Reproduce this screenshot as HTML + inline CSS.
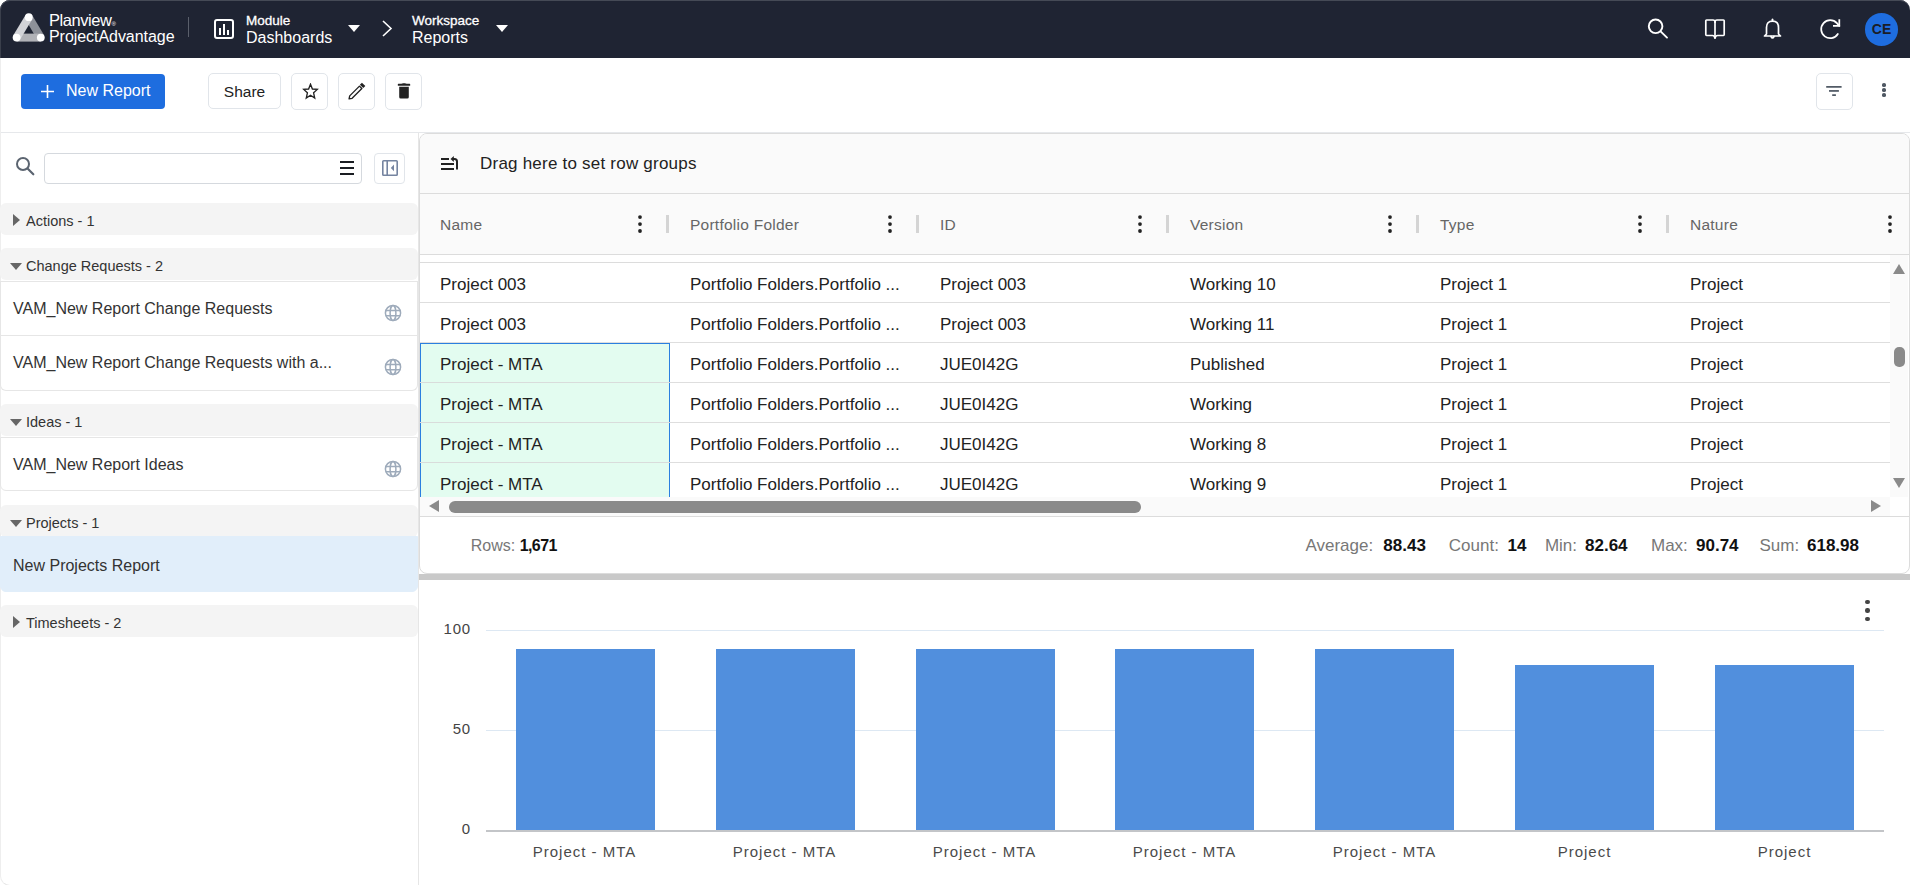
<!DOCTYPE html>
<html><head><meta charset="utf-8">
<style>
*{box-sizing:border-box;margin:0;padding:0}
html,body{width:1910px;height:885px;overflow:hidden;background:#fff;font-family:"Liberation Sans",sans-serif;color:#222}
.abs{position:absolute}
#hdr{position:absolute;left:0;top:0;width:1910px;height:58px;background:#1f2433;border-radius:10px 10px 0 0;box-shadow:inset 0 1px 0 #454a56, inset 1px 0 0 #3a3f4b}
.wt{color:#fff;white-space:nowrap}
.btn{position:absolute;border:1px solid #e1e5ea;border-radius:5px;background:#fff}
.ico{position:absolute}
.grp{position:absolute;left:0;width:418px;height:32px;background:#f4f4f4;border-radius:6px;font-size:14.5px;color:#333;line-height:37px;padding-left:26px;white-space:nowrap}
.tri-r{position:absolute;left:13px;top:11px;width:0;height:0;border-top:6px solid transparent;border-bottom:6px solid transparent;border-left:7px solid #666}
.tri-d{position:absolute;left:10px;top:15px;width:0;height:0;border-left:6px solid transparent;border-right:6px solid transparent;border-top:7px solid #666}
.item{position:absolute;left:0;width:418px;background:#fff;border:1px solid #e6e6e6;font-size:16px;color:#333;padding-left:12px;white-space:nowrap}
.glb{position:absolute;right:15px}
.hcell{position:absolute;top:195px;height:60px;line-height:60px;font-size:15.5px;letter-spacing:0.25px;color:#666;white-space:nowrap}
.cell{position:absolute;height:40px;line-height:40px;font-size:17px;color:#222;white-space:nowrap}
.sep{position:absolute;top:215px;width:3px;height:18px;background:#d4d4d4}
.keb{position:absolute;width:4px}
.keb i{display:block;width:3.6px;height:3.6px;border-radius:50%;background:#222;margin-bottom:3.3px;margin-left:0.2px}
.rowline{position:absolute;left:420px;width:1470px;height:1px;background:#dedede}
.lbl{color:#777}
.val{font-weight:700;color:#111}
.bar{position:absolute;background:#518fdd;width:139px}
.xl{position:absolute;top:843px;font-size:15px;color:#4a4a4a;white-space:nowrap;text-align:center;width:200px;letter-spacing:1px;text-indent:1px}
.yl{position:absolute;font-size:15px;color:#444;text-align:right;width:40px;letter-spacing:0.8px}
</style></head>
<body>
<!-- HEADER -->
<div id="hdr">
  <!-- logo -->
  <svg class="ico" style="left:8px;top:8px" width="42" height="38" viewBox="0 0 42 38">
    <line x1="20.8" y1="9.2" x2="32.8" y2="29.6" stroke="#8e9199" stroke-width="8"/>
    <line x1="8.6" y1="29.6" x2="32.8" y2="29.6" stroke="#b1b2b7" stroke-width="8"/>
    <line x1="20.8" y1="9.2" x2="8.6" y2="29.6" stroke="#d3d4d8" stroke-width="8"/>
    <circle cx="20.8" cy="9.2" r="3.9" fill="#fff"/>
    <circle cx="8.6" cy="29.6" r="3.9" fill="#fff"/>
    <circle cx="32.8" cy="29.6" r="3.9" fill="#fff"/>
  </svg>
  <div class="abs wt" style="left:49px;top:11px;font-size:16.5px;line-height:19px;letter-spacing:-0.45px">Planview<span style="font-size:6px">®</span></div>
  <div class="abs wt" style="left:49px;top:28px;font-size:16px;line-height:18px;letter-spacing:-0.05px">ProjectAdvantage</div>
  <div class="abs" style="left:188px;top:17px;width:1px;height:20px;background:#5a5f6b"></div>
  <!-- module -->
  <svg class="ico" style="left:214px;top:19px" width="20" height="20" viewBox="0 0 20 20">
    <rect x="1" y="1" width="18" height="18" rx="2" fill="none" stroke="#fff" stroke-width="2"/>
    <rect x="5" y="9" width="2" height="7" fill="#fff"/><rect x="9" y="5" width="2" height="11" fill="#fff"/><rect x="13" y="11" width="2" height="5" fill="#fff"/>
  </svg>
  <div class="abs wt" style="left:246px;top:13px;font-size:13.5px;line-height:15px;-webkit-text-stroke:0.3px #fff">Module</div>
  <div class="abs wt" style="left:246px;top:29px;font-size:16px;line-height:18px">Dashboards</div>
  <div class="abs" style="left:348px;top:25px;border-left:6px solid transparent;border-right:6px solid transparent;border-top:7px solid #fff"></div>
  <svg class="ico" style="left:381px;top:20px" width="12" height="17" viewBox="0 0 12 17"><polyline points="2,1 10,8.5 2,16" fill="none" stroke="#fff" stroke-width="1.6"/></svg>
  <div class="abs wt" style="left:412px;top:13px;font-size:13.5px;line-height:15px;-webkit-text-stroke:0.3px #fff">Workspace</div>
  <div class="abs wt" style="left:412px;top:29px;font-size:16px;line-height:18px">Reports</div>
  <div class="abs" style="left:496px;top:25px;border-left:6px solid transparent;border-right:6px solid transparent;border-top:7px solid #fff"></div>
  <!-- right icons -->
  <svg class="ico" style="left:1646px;top:17px" width="24" height="24" viewBox="0 0 24 24"><circle cx="9.6" cy="9.3" r="6.8" fill="none" stroke="#fff" stroke-width="1.9"/><line x1="14.6" y1="14.4" x2="21" y2="20.6" stroke="#fff" stroke-width="1.9" stroke-linecap="round"/></svg>
  <svg class="ico" style="left:1703px;top:17px" width="24" height="24" viewBox="0 0 24 24"><g fill="none" stroke="#fff" stroke-width="1.7" stroke-linejoin="round" stroke-linecap="round"><path d="M12 5 Q12 3 10 3 H3.6 Q2.8 3 2.8 3.8 V17.6 Q2.8 18.5 3.6 18.5 H9.5 Q11.3 18.5 12 21"/><path d="M12 5 Q12 3 14 3 H20.4 Q21.2 3 21.2 3.8 V17.6 Q21.2 18.5 20.4 18.5 H14.5 Q12.7 18.5 12 21"/><path d="M12 5 V20.5"/></g></svg>
  <svg class="ico" style="left:1760px;top:17px" width="24" height="24" viewBox="0 0 24 24"><g fill="none" stroke="#fff" stroke-width="1.7" stroke-linejoin="round" stroke-linecap="round"><path d="M6.5 17 V10.5 Q6.5 4.2 12.5 4.2 Q18.5 4.2 18.5 10.5 V17 L20.5 19 H4.5 L6.5 17 Z"/><path d="M12.5 2.3 V4.2"/><path d="M11 19.5 Q12.5 22.3 14 19.5"/></g></svg>
  <svg class="ico" style="left:1818px;top:17px" width="24" height="24" viewBox="0 0 24 24"><g fill="none" stroke="#fff" stroke-width="1.75" stroke-linecap="round"><path d="M19.83 16.97 A9.0 9.0 0 1 1 18.89 6.18 L21.3 8.9"/><polyline points="21.3,2.2 21.3,8.9 15,8.9" stroke-linejoin="miter" stroke-linecap="butt"/></g></svg>
  <div class="abs" style="left:1865px;top:13px;width:33px;height:32.5px;border-radius:50%;background:#1e6ddf;color:#1a1d26;font-weight:700;font-size:14px;line-height:32px;text-align:center">CE</div>
</div>

<!-- TOOLBAR -->
<div class="abs" style="left:21px;top:74px;width:144px;height:35px;background:#1e6ddf;border-radius:4px"></div>
<svg class="ico" style="left:40px;top:84px" width="15" height="15" viewBox="0 0 15 15"><path d="M7.5 1 V14 M1 7.5 H14" stroke="#fff" stroke-width="1.6"/></svg>
<div class="abs wt" style="left:66px;top:82px;font-size:16px;line-height:18px">New Report</div>
<div class="btn" style="left:208px;top:73px;width:73px;height:36px;font-size:15.5px;line-height:36px;text-align:center;color:#222">Share</div>
<div class="btn" style="left:291px;top:73px;width:37px;height:37px"></div>
<svg class="ico" style="left:301.5px;top:83px" width="17" height="17" viewBox="0 0 17 17"><polygon points="8.5,1.2 10.4,6 15.3,6.4 11.6,9.8 12.7,15 8.5,12.2 4.3,15 5.4,9.8 1.7,6.4 6.6,6" fill="none" stroke="#222" stroke-width="1.35" stroke-linejoin="miter"/></svg>
<div class="btn" style="left:338px;top:73px;width:37px;height:37px"></div>
<svg class="ico" style="left:345px;top:81px" width="22" height="22" viewBox="0 0 22 22"><g transform="rotate(45 11 11)"><path d="M9.3 4.4 H12.7 V18.2 L11 20.8 L9.3 18.2 Z" fill="none" stroke="#222" stroke-width="1.35" stroke-linejoin="round"/><rect x="8.6" y="0.2" width="4.8" height="2.9" fill="#222"/></g></svg>
<div class="btn" style="left:385px;top:73px;width:37px;height:37px"></div>
<svg class="ico" style="left:397px;top:82px" width="14" height="18" viewBox="0 0 14 18"><rect x="0.8" y="1.8" width="12.4" height="2" rx="0.6" fill="#222"/><path d="M4.3 2 Q7 0.6 9.7 2 Z" fill="#222"/><path d="M2.2 4.8 H11.8 V15 Q11.8 16.5 10.3 16.5 H3.7 Q2.2 16.5 2.2 15 Z" fill="#222"/></svg>

<div class="btn" style="left:1816px;top:73px;width:37px;height:37px"></div>
<svg class="ico" style="left:1826px;top:85px" width="16" height="13" viewBox="0 0 16 13"><rect x="0.2" y="1" width="15.4" height="1.75" fill="#525b66"/><rect x="3" y="5.05" width="9.9" height="1.75" fill="#525b66"/><rect x="6.2" y="9.25" width="3.7" height="1.75" fill="#525b66"/></svg>
<div class="keb" style="left:1882px;top:83px"><i style="background:#4f5863;width:3.7px;height:3.7px;margin-bottom:1.35px"></i><i style="background:#4f5863;width:3.7px;height:3.7px;margin-bottom:1.35px"></i><i style="background:#4f5863;width:3.7px;height:3.7px"></i></div>

<div class="abs" style="left:0;top:132px;width:1910px;height:1px;background:#e6e8eb"></div>
<div class="abs" style="left:0;top:58px;width:1px;height:80px;background:#eeeeee"></div><div class="abs" style="left:0;top:133px;width:419px;height:753px;border:1px solid #e6e6e6;border-left-color:#eeeeee;border-top:none;border-radius:0 0 0 10px"></div>

<!-- LEFT PANEL -->

<svg class="ico" style="left:15px;top:156px" width="22" height="22" viewBox="0 0 22 22"><circle cx="8" cy="8" r="6" fill="none" stroke="#5b6470" stroke-width="2"/><line x1="12.8" y1="12.8" x2="18.3" y2="18.3" stroke="#5b6470" stroke-width="2.2" stroke-linecap="round"/></svg>
<div class="abs" style="left:44px;top:153px;width:318px;height:31px;border:1px solid #d5d9de;border-radius:4px;background:#fff"></div>
<svg class="ico" style="left:340px;top:160px" width="14" height="16" viewBox="0 0 14 16"><rect x="0" y="1" width="14" height="2" fill="#1a1d22"/><rect x="0" y="7" width="14" height="2" fill="#1a1d22"/><rect x="0" y="13" width="14" height="2" fill="#1a1d22"/></svg>
<div class="abs" style="left:374px;top:153px;width:31px;height:31px;border:1px solid #e1e5ea;border-radius:4px"></div>
<svg class="ico" style="left:382px;top:160px" width="16" height="16" viewBox="0 0 16 16"><rect x="0.8" y="0.8" width="14.4" height="14.4" rx="0.8" fill="none" stroke="#7584a0" stroke-width="1.6"/><line x1="5.2" y1="1" x2="5.2" y2="15" stroke="#7584a0" stroke-width="1.6"/><polygon points="12,4.6 12,11.2 8.8,7.9" fill="#7584a0"/></svg>

<div class="grp" style="top:203px"><span class="tri-r"></span>Actions - 1</div>
<div class="grp" style="top:248px"><span class="tri-d"></span>Change Requests - 2</div>
<div class="item" style="top:281px;height:55px;line-height:54px;border-radius:0">VAM_New Report Change Requests<svg class="glb" style="top:22px" width="18" height="18" viewBox="0 0 18 18"><g fill="none" stroke="#9eabbb" stroke-width="1.5"><circle cx="9" cy="9" r="7.6"/><ellipse cx="9" cy="9" rx="2.9" ry="7.6"/><path d="M1.8 6.5 H16.2 M1.8 11.7 H16.2"/></g></svg></div>
<div class="item" style="top:336px;height:55px;line-height:53px;border-top:none;border-radius:0 0 6px 6px">VAM_New Report Change Requests with a...<svg class="glb" style="top:22px" width="18" height="18" viewBox="0 0 18 18"><g fill="none" stroke="#9eabbb" stroke-width="1.5"><circle cx="9" cy="9" r="7.6"/><ellipse cx="9" cy="9" rx="2.9" ry="7.6"/><path d="M1.8 6.5 H16.2 M1.8 11.7 H16.2"/></g></svg></div>
<div class="grp" style="top:404px"><span class="tri-d"></span>Ideas - 1</div>
<div class="item" style="top:437px;height:54px;line-height:53px;border-radius:0 0 6px 6px">VAM_New Report Ideas<svg class="glb" style="top:22px" width="18" height="18" viewBox="0 0 18 18"><g fill="none" stroke="#9eabbb" stroke-width="1.5"><circle cx="9" cy="9" r="7.6"/><ellipse cx="9" cy="9" rx="2.9" ry="7.6"/><path d="M1.8 6.5 H16.2 M1.8 11.7 H16.2"/></g></svg></div>
<div class="grp" style="top:505px"><span class="tri-d"></span>Projects - 1</div>
<div class="item" style="top:536px;height:56px;line-height:58px;background:#e1eefa;border-color:#e1eefa;border-radius:0 0 6px 6px">New Projects Report</div>
<div class="grp" style="top:605px"><span class="tri-r"></span>Timesheets - 2</div>

<!-- GRID PANEL -->
<div class="abs" style="left:419px;top:133px;width:1491px;height:441px;border:1px solid #dcdcdc;border-radius:8px;background:#fff;overflow:hidden">
  <div class="abs" style="left:0;top:0;width:1491px;height:120px;background:#fafafa"></div>
  <div class="abs" style="left:0;top:59px;width:1491px;height:1px;background:#dcdcdc"></div>
  <div class="abs" style="left:0;top:120px;width:1491px;height:1px;background:#dcdcdc"></div>
  <div class="abs" style="left:0;top:128px;width:1470px;height:1px;background:#dcdcdc"></div>
</div>
<svg class="ico" style="left:440px;top:155px" width="20" height="16" viewBox="0 0 20 16"><g stroke="#222" stroke-width="2" fill="none"><line x1="1" y1="4" x2="9" y2="4"/><line x1="1" y1="9" x2="14" y2="9"/><line x1="1" y1="14" x2="14" y2="14"/><path d="M17 14.5 V6.5 Q17 4 14.5 4 H12.5"/></g><polygon points="10.5,4 13.8,1 13.8,7" fill="#222"/></svg>
<div class="abs" style="left:480px;top:154px;font-size:17px;line-height:20px;color:#222;white-space:nowrap;letter-spacing:0.22px">Drag here to set row groups</div>

<div class="hcell" style="left:440px">Name</div>
<div class="hcell" style="left:690px">Portfolio Folder</div>
<div class="hcell" style="left:940px">ID</div>
<div class="hcell" style="left:1190px">Version</div>
<div class="hcell" style="left:1440px">Type</div>
<div class="hcell" style="left:1690px">Nature</div>
<div class="keb" style="left:638px;top:215px;width:6px"><svg width="6" height="20" viewBox="0 0 6 20" style="display:block"><circle cx="2" cy="2.1" r="1.9" fill="#222"/><circle cx="2" cy="9.1" r="1.9" fill="#222"/><circle cx="2" cy="16" r="1.9" fill="#222"/></svg></div>
<div class="keb" style="left:888px;top:215px;width:6px"><svg width="6" height="20" viewBox="0 0 6 20" style="display:block"><circle cx="2" cy="2.1" r="1.9" fill="#222"/><circle cx="2" cy="9.1" r="1.9" fill="#222"/><circle cx="2" cy="16" r="1.9" fill="#222"/></svg></div>
<div class="keb" style="left:1138px;top:215px;width:6px"><svg width="6" height="20" viewBox="0 0 6 20" style="display:block"><circle cx="2" cy="2.1" r="1.9" fill="#222"/><circle cx="2" cy="9.1" r="1.9" fill="#222"/><circle cx="2" cy="16" r="1.9" fill="#222"/></svg></div>
<div class="keb" style="left:1388px;top:215px;width:6px"><svg width="6" height="20" viewBox="0 0 6 20" style="display:block"><circle cx="2" cy="2.1" r="1.9" fill="#222"/><circle cx="2" cy="9.1" r="1.9" fill="#222"/><circle cx="2" cy="16" r="1.9" fill="#222"/></svg></div>
<div class="keb" style="left:1638px;top:215px;width:6px"><svg width="6" height="20" viewBox="0 0 6 20" style="display:block"><circle cx="2" cy="2.1" r="1.9" fill="#222"/><circle cx="2" cy="9.1" r="1.9" fill="#222"/><circle cx="2" cy="16" r="1.9" fill="#222"/></svg></div>
<div class="keb" style="left:1888px;top:215px;width:6px"><svg width="6" height="20" viewBox="0 0 6 20" style="display:block"><circle cx="2" cy="2.1" r="1.9" fill="#222"/><circle cx="2" cy="9.1" r="1.9" fill="#222"/><circle cx="2" cy="16" r="1.9" fill="#222"/></svg></div>
<div class="sep" style="left:666px"></div>
<div class="sep" style="left:916px"></div>
<div class="sep" style="left:1166px"></div>
<div class="sep" style="left:1416px"></div>
<div class="sep" style="left:1666px"></div>

<!-- selected name cells -->
<div class="abs" style="left:420px;top:343px;width:250px;height:154px;background:#e3fcf0;border:1px solid #2b7fe0;border-bottom:none"></div>
<div class="abs" style="left:420px;top:382px;width:250px;height:1px;background:#d9dcdb"></div>
<div class="abs" style="left:420px;top:422px;width:250px;height:1px;background:#d9dcdb"></div>
<div class="abs" style="left:420px;top:462px;width:250px;height:1px;background:#d9dcdb"></div>
<div class="rowline" style="top:302px"></div>
<div class="rowline" style="top:342px"></div>
<div class="rowline" style="top:382px;left:670px;width:1220px"></div>
<div class="rowline" style="top:422px;left:670px;width:1220px"></div>
<div class="rowline" style="top:462px;left:670px;width:1220px"></div>

<div id="rows">
<div class="cell" style="left:440px;top:265px">Project 003</div>
<div class="cell" style="left:690px;top:265px">Portfolio Folders.Portfolio ...</div>
<div class="cell" style="left:940px;top:265px">Project 003</div>
<div class="cell" style="left:1190px;top:265px">Working 10</div>
<div class="cell" style="left:1440px;top:265px">Project 1</div>
<div class="cell" style="left:1690px;top:265px">Project</div>
<div class="cell" style="left:440px;top:305px">Project 003</div>
<div class="cell" style="left:690px;top:305px">Portfolio Folders.Portfolio ...</div>
<div class="cell" style="left:940px;top:305px">Project 003</div>
<div class="cell" style="left:1190px;top:305px">Working 11</div>
<div class="cell" style="left:1440px;top:305px">Project 1</div>
<div class="cell" style="left:1690px;top:305px">Project</div>
<div class="cell" style="left:440px;top:345px">Project - MTA</div>
<div class="cell" style="left:690px;top:345px">Portfolio Folders.Portfolio ...</div>
<div class="cell" style="left:940px;top:345px">JUE0I42G</div>
<div class="cell" style="left:1190px;top:345px">Published</div>
<div class="cell" style="left:1440px;top:345px">Project 1</div>
<div class="cell" style="left:1690px;top:345px">Project</div>
<div class="cell" style="left:440px;top:385px">Project - MTA</div>
<div class="cell" style="left:690px;top:385px">Portfolio Folders.Portfolio ...</div>
<div class="cell" style="left:940px;top:385px">JUE0I42G</div>
<div class="cell" style="left:1190px;top:385px">Working</div>
<div class="cell" style="left:1440px;top:385px">Project 1</div>
<div class="cell" style="left:1690px;top:385px">Project</div>
<div class="cell" style="left:440px;top:425px">Project - MTA</div>
<div class="cell" style="left:690px;top:425px">Portfolio Folders.Portfolio ...</div>
<div class="cell" style="left:940px;top:425px">JUE0I42G</div>
<div class="cell" style="left:1190px;top:425px">Working 8</div>
<div class="cell" style="left:1440px;top:425px">Project 1</div>
<div class="cell" style="left:1690px;top:425px">Project</div>
<div class="cell" style="left:440px;top:465px">Project - MTA</div>
<div class="cell" style="left:690px;top:465px">Portfolio Folders.Portfolio ...</div>
<div class="cell" style="left:940px;top:465px">JUE0I42G</div>
<div class="cell" style="left:1190px;top:465px">Working 9</div>
<div class="cell" style="left:1440px;top:465px">Project 1</div>
<div class="cell" style="left:1690px;top:465px">Project</div>
</div>

<!-- h scrollbar -->
<div class="abs" style="left:420px;top:497px;width:1470px;height:19px;background:#fafafa"></div>
<div class="abs" style="left:420px;top:516px;width:1490px;height:1px;background:#dcdcdc"></div>
<div class="abs" style="left:429px;top:500px;border-top:6px solid transparent;border-bottom:6px solid transparent;border-right:10px solid #8a8a8a"></div>
<div class="abs" style="left:449px;top:501px;width:692px;height:11.5px;border-radius:6px;background:#8a8a8a"></div>
<div class="abs" style="left:1871px;top:500px;border-top:6px solid transparent;border-bottom:6px solid transparent;border-left:10px solid #8a8a8a"></div>
<!-- v scrollbar -->
<div class="abs" style="left:1890px;top:255px;width:18px;height:242px;background:#fafafa"></div>
<div class="abs" style="left:1893px;top:264px;border-left:6px solid transparent;border-right:6px solid transparent;border-bottom:10px solid #8a8a8a"></div>
<div class="abs" style="left:1894px;top:347px;width:11px;height:20px;border-radius:5px;background:#8a8a8a"></div>
<div class="abs" style="left:1893px;top:478px;border-left:6px solid transparent;border-right:6px solid transparent;border-top:10px solid #8a8a8a"></div>

<!-- status bar -->
<div class="abs lbl" style="left:470.7px;top:536px;font-size:16px;line-height:20px;white-space:nowrap;letter-spacing:0px">Rows:</div>
<div class="abs val" style="left:519.7px;top:536px;font-size:16px;line-height:20px;white-space:nowrap;letter-spacing:-0.6px">1,671</div>
<div class="abs lbl" style="left:1305.4px;top:536px;font-size:17px;line-height:20px;white-space:nowrap;letter-spacing:0px">Average:</div>
<div class="abs val" style="left:1383.3px;top:536px;font-size:17px;line-height:20px;white-space:nowrap;letter-spacing:0px">88.43</div>
<div class="abs lbl" style="left:1448.8px;top:536px;font-size:17px;line-height:20px;white-space:nowrap;letter-spacing:0px">Count:</div>
<div class="abs val" style="left:1507.5px;top:536px;font-size:17px;line-height:20px;white-space:nowrap;letter-spacing:0px">14</div>
<div class="abs lbl" style="left:1544.9px;top:536px;font-size:17px;line-height:20px;white-space:nowrap;letter-spacing:0px">Min:</div>
<div class="abs val" style="left:1585px;top:536px;font-size:17px;line-height:20px;white-space:nowrap;letter-spacing:0px">82.64</div>
<div class="abs lbl" style="left:1651px;top:536px;font-size:17px;line-height:20px;white-space:nowrap;letter-spacing:0px">Max:</div>
<div class="abs val" style="left:1696px;top:536px;font-size:17px;line-height:20px;white-space:nowrap;letter-spacing:0px">90.74</div>
<div class="abs lbl" style="left:1759.5px;top:536px;font-size:17px;line-height:20px;white-space:nowrap;letter-spacing:0px">Sum:</div>
<div class="abs val" style="left:1807px;top:536px;font-size:17px;line-height:20px;white-space:nowrap;letter-spacing:0px">618.98</div>

<!-- divider -->
<div class="abs" style="left:419px;top:574px;width:1491px;height:6px;background:#c9c9c9"></div>

<!-- CHART -->

<div class="keb" style="left:1865px;top:600px;width:5px"><i style="background:#444;width:4.4px;height:4.4px;margin-bottom:4px"></i><i style="background:#444;width:4.4px;height:4.4px;margin-bottom:4px"></i><i style="background:#444;width:4.4px;height:4.4px"></i></div>
<div class="abs" style="left:486px;top:630px;width:1398px;height:1px;background:#dde8f3"></div>
<div class="abs" style="left:486px;top:730px;width:1398px;height:1px;background:#dde8f3"></div>
<div class="abs" style="left:486px;top:830px;width:1398px;height:1.5px;background:#c3c5c8"></div>
<div class="yl" style="left:431px;top:620px">100</div>
<div class="yl" style="left:431px;top:720px">50</div>
<div class="yl" style="left:431px;top:820px">0</div>
<div class="bar" style="left:516px;top:649px;height:181px"></div>
<div class="bar" style="left:716px;top:649px;height:181px"></div>
<div class="bar" style="left:916px;top:649px;height:181px"></div>
<div class="bar" style="left:1115px;top:649px;height:181px"></div>
<div class="bar" style="left:1315px;top:649px;height:181px"></div>
<div class="bar" style="left:1515px;top:665px;height:165px"></div>
<div class="bar" style="left:1715px;top:665px;height:165px"></div>
<div class="xl" style="left:484px">Project - MTA</div>
<div class="xl" style="left:684px">Project - MTA</div>
<div class="xl" style="left:884px">Project - MTA</div>
<div class="xl" style="left:1084px">Project - MTA</div>
<div class="xl" style="left:1284px">Project - MTA</div>
<div class="xl" style="left:1484px">Project</div>
<div class="xl" style="left:1684px">Project</div>
</body></html>
